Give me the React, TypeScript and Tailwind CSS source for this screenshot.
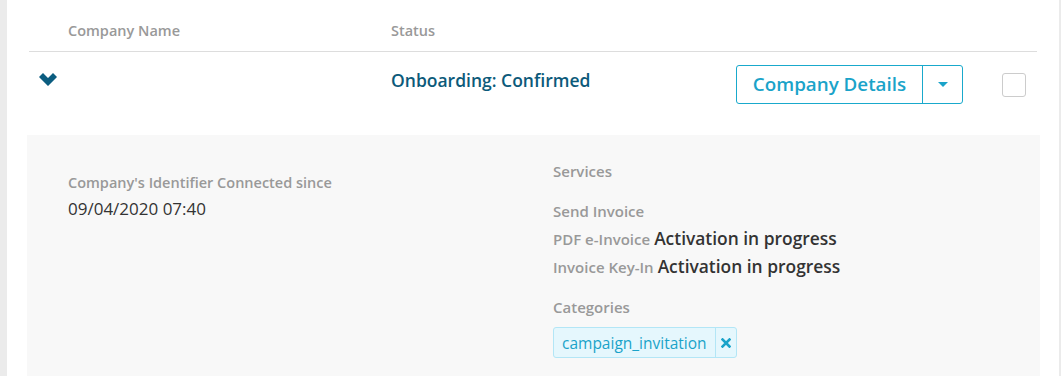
import React from "react";

const font = { fontFamily: '"Open Sans", "Noto Sans", sans-serif' };

function Chevron() {
  return (
    <svg width="18" height="13" viewBox="0 0 18 13" aria-hidden>
      <path d="M0 4 L4 0 L9 5 L14 0 L18 4 L9 13 Z" fill="#0b5d80" />
    </svg>
  );
}

function Caret() {
  return (
    <svg width="10" height="6" viewBox="0 0 10 6" aria-hidden>
      <path d="M0 0 L10 0 L5 5 Z" fill="#1aa3c9" />
    </svg>
  );
}

function Cross() {
  return (
    <svg width="10" height="10" viewBox="0 0 10 10" aria-hidden>
      <path d="M1.5 1.5 L8.5 8.5 M8.5 1.5 L1.5 8.5" stroke="#1aa3c9" strokeWidth="2.6" strokeLinecap="square" />
    </svg>
  );
}

function ServiceLine({ label, value }: { label: string; value: string }) {
  return (
    <div className="flex h-[28px] items-baseline gap-[4px] leading-[28px]">
      <span className="text-[15px] font-semibold text-[#999]">{label}</span>
      <span className="text-[17.4px] font-semibold text-[#333]">{value}</span>
    </div>
  );
}

export default function App() {
  return (
    <div className="flex h-[376px] w-[1064px] overflow-hidden bg-white" style={font}>
      <div className="w-[7px] shrink-0 bg-[#ebebeb]" />
      <main className="flex-1">
        <div className="mx-[22px] flex h-[52px] items-end border-b border-[#dddddd] pb-[10px] text-[14.5px] leading-[20px] font-semibold text-[#999]">
          <div className="w-[362px] pl-[39px]">Company Name</div>
          <div>Status</div>
        </div>

        <div className="mx-[22px] flex h-[83px] items-start">
          <div className="w-[362px] pt-[21px] pl-[10px]">
            <Chevron />
          </div>
          <div className="w-[345px] pt-[16px] text-[17.5px] leading-[24px] font-semibold text-[#0c5a7a]">
            Onboarding: Confirmed
          </div>
          <div className="mt-[13px] flex h-[39px] w-[227px] rounded-[3px] border border-[#19a9cc]">
            <button type="button" className="flex-1 text-[18.8px] font-semibold text-[#1aa3c9]">
              Company Details
            </button>
            <div className="flex w-[40px] items-center justify-center border-l border-[#19a9cc]">
              <Caret />
            </div>
          </div>
          <div className="mt-[21px] ml-[39px] h-[24px] w-[24px] rounded-[3px] border border-[#cccccc] bg-white" />
        </div>

        <section className="mr-[19px] ml-[20px] flex h-[260px] bg-[#f8f8f8]">
          <div className="w-[526px] pt-[38px] pl-[41px]">
            <div className="text-[14.5px] leading-[20px] font-semibold text-[#999]">Company's Identifier Connected since</div>
            <div className="mt-[4px] text-[17px] leading-[24px] text-[#333]">09/04/2020 07:40</div>
          </div>
          <div className="pt-[26px] text-[15px] leading-[20px]">
            <div className="font-semibold text-[#999]">Services</div>
            <div className="mt-[20px] font-semibold text-[#999]">Send Invoice</div>
            <div className="mt-[3px]">
              <ServiceLine label="PDF e-Invoice" value="Activation in progress" />
              <ServiceLine label="Invoice Key-In" value="Activation in progress" />
            </div>
            <div className="mt-[17px] font-semibold text-[#999]">Categories</div>
            <div className="mt-[10px] inline-flex h-[31px] items-stretch rounded-[3px] border border-[#b3e6f6] bg-[#e5f7fd]">
              <span className="flex items-center px-[8px] text-[15.5px] text-[#1aa3c9]">campaign_invitation</span>
              <span className="flex w-[21px] items-center justify-center border-l border-[#b3e6f6]">
                <Cross />
              </span>
            </div>
          </div>
        </section>
      </main>
      <div className="w-[2px] shrink-0 bg-[#ebebeb]" />
      <div className="w-[3px] shrink-0 bg-white" />
    </div>
  );
}
